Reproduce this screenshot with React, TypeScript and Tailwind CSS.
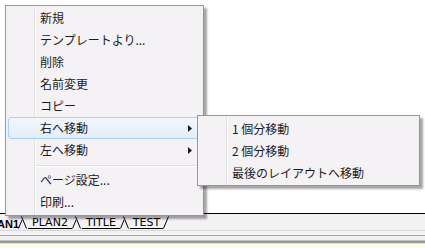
const menuFont = { fontFamily: '"Noto Sans CJK JP", "Noto Sans", sans-serif' };

const Arrow = () => (
  <svg width="4" height="7" viewBox="0 0 4 7" className="ml-auto mr-[8px]">
    <path d="M0 0 L4 3.5 L0 7 Z" fill="#1b1b1b" />
  </svg>
);

const Item = ({ label, active, sub }: { label: string; active?: boolean; sub?: boolean }) => (
  <div
    className={`mx-[2px] flex h-[22px] items-center rounded-[3px] border pl-[31px] ${
      active
        ? "border-[#a8d2f5] bg-[linear-gradient(to_bottom,#f3f7fc,#e4edf8)]"
        : "border-transparent"
    }`}
  >
    <span className="text-[12px] leading-none text-[#1b1b1b]">{label}</span>
    {sub && <Arrow />}
  </div>
);

const Sep = () => (
  <div className="flex h-[8px] flex-col pt-[4px] pl-[30px] pr-[2px]">
    <div className="h-px bg-[#e0dfe0]" />
    <div className="h-px bg-white" />
  </div>
);

const gutter =
  "bg-[linear-gradient(to_right,#f5f2f5_28px,#e2e1e2_28px,#e2e1e2_29px,#ffffff_29px,#ffffff_30px,#f5f2f5_30px)]";

// tab edges: "\" of the next tab over "/" of the previous one
const TabEdge = () => (
  <svg width="10" height="16" viewBox="0 0 10 16" className="shrink-0">
    <path d="M0.5 14.5 L4 6" stroke="#000" strokeWidth="1" fill="none" />
    <path d="M3.5 2.5 L8.5 14.5" stroke="#000" strokeWidth="1" fill="none" />
  </svg>
);

const LastEdge = () => (
  <svg width="8" height="16" viewBox="0 0 8 16" className="shrink-0">
    <path d="M0.5 14.5 L5.5 2.5" stroke="#000" strokeWidth="1" fill="none" />
  </svg>
);

const Tab = ({ label, w }: { label: string; w: string }) => (
  <div className={`flex h-[15px] items-end justify-center border-b border-black ${w}`}>
    <span className="text-[11px] leading-[10px] text-black">{label}</span>
  </div>
);

export default function App() {
  return (
    <div className="relative h-[248px] w-[425px] overflow-hidden bg-white">
      <div className="flex h-full flex-col">
        {/* drawing area */}
        <div className="h-[214px] shrink-0 border-b border-black bg-white" />

        {/* layout tabs */}
        <div
          className="flex h-[16px] shrink-0 items-start bg-[#f4f1f4]"
          style={{ fontFamily: '"DejaVu Sans", Verdana, sans-serif' }}
        >
          <div
            className="ml-[-3px] flex h-[15px] w-[21px] items-end"
            style={{ fontFamily: '"Liberation Sans", Arial, sans-serif' }}
          >
            <span className="text-[11px] font-bold leading-[10px] text-black">AN1</span>
          </div>
          <TabEdge />
          <Tab label="PLAN2" w="w-[44px]" />
          <TabEdge />
          <Tab label="TITLE" w="w-[38px]" />
          <TabEdge />
          <Tab label="TEST" w="w-[33px]" />
          <LastEdge />
        </div>

        {/* scroll / status strips */}
        <div className="h-px shrink-0 bg-[#d8d8d8]" />
        <div className="h-[4px] shrink-0 bg-[#f4f1f4]" />
        <div className="h-px shrink-0 bg-[#a5a5a5]" />
        <div className="h-[4px] shrink-0 bg-[#f0f0f0]" />
        <div className="h-px shrink-0 bg-[#c0c0c0]" />
        <div className="h-[2px] shrink-0 bg-[#9a9a9a]" />
        <div className="h-px shrink-0 bg-[#e0e0e0]" />
        <div className="flex-1 bg-[#fffde8]" />
      </div>

      {/* context menu */}
      <div
        className={`absolute left-[5px] top-[5px] flex h-[211px] w-[199px] flex-col border border-[#979797] py-px shadow-[3px_3px_2px_rgba(0,0,0,0.35)] ${gutter}`}
        style={menuFont}
      >
        <Item label="新規" />
        <Item label="テンプレートより..." />
        <Item label="削除" />
        <Item label="名前変更" />
        <Item label="コピー" />
        <Item label="右へ移動" active sub />
        <Item label="左へ移動" sub />
        <Sep />
        <Item label="ページ設定..." />
        <Item label="印刷..." />
      </div>

      {/* submenu */}
      <div
        className={`absolute left-[197px] top-[115px] flex h-[71px] w-[223px] flex-col border border-[#979797] pt-[2px] shadow-[3px_3px_2px_rgba(0,0,0,0.35)] ${gutter}`}
        style={menuFont}
      >
        <Item label="1 個分移動" />
        <Item label="2 個分移動" />
        <Item label="最後のレイアウトへ移動" />
      </div>
    </div>
  );
}
